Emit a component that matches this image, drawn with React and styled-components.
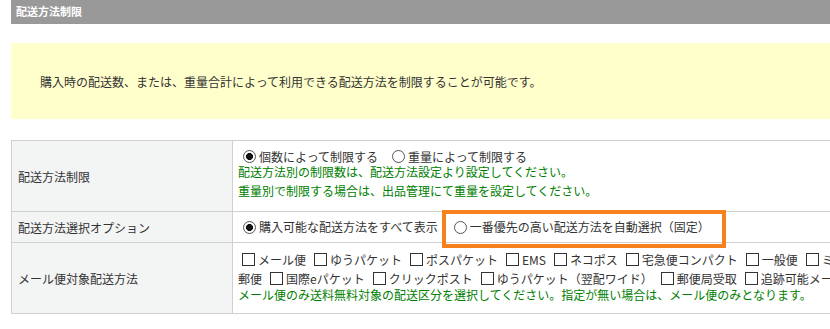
import React from 'react';
import styled, { createGlobalStyle } from 'styled-components';

const GlobalStyle = createGlobalStyle`
  body {
    margin: 0;
    overflow: hidden;
    background: #fff;
    font-family: "Noto Sans CJK JP", "Noto Sans", sans-serif;
    color: #333;
  }
`;

const App = () => {
  return (
    <Page>
      <GlobalStyle />
      <SectionBar>配送方法制限</SectionBar>
      <Notice>購入時の配送数、または、重量合計によって利用できる配送方法を制限することが可能です。</Notice>
      <SettingsTable>
        <colgroup>
          <col style={{ width: 221 }} />
          <col />
        </colgroup>
        <tbody>
          <tr>
            <LabelCell>配送方法制限</LabelCell>
            <ValueCell $pad="7px 5px 11px">
              <Line $h={17}>
                <Choice>
                  <Radio name="limit" defaultChecked />
                  個数によって制限する
                </Choice>
                <Choice>
                  <Radio name="limit" />
                  重量によって制限する
                </Choice>
              </Line>
              <Note $h={14}>配送方法別の制限数は、配送方法設定より設定してください。</Note>
              <Note $h={18} $top={3}>重量別で制限する場合は、出品管理にて重量を設定してください。</Note>
            </ValueCell>
          </tr>
          <tr>
            <LabelCell>配送方法選択オプション</LabelCell>
            <ValueCell $pad="6px 5px">
              <Line $h={18}>
                <Choice $gap={11}>
                  <Radio name="option" defaultChecked />
                  購入可能な配送方法をすべて表示
                </Choice>
                <Choice $gap={0}>
                  <Radio name="option" />
                  一番優先の高い配送方法を自動選択（固定）
                  <Highlight />
                </Choice>
              </Line>
            </ValueCell>
          </tr>
          <tr>
            <LabelCell>メール便対象配送方法</LabelCell>
            <ValueCell $pad="7px 5px 11px">
              <Line $h={19}>
                <Item><Check />メール便</Item>
                <Item><Check />ゆうパケット</Item>
                <Item><Check />ポスパケット</Item>
                <Item><Check />EMS</Item>
                <Item><Check />ネコポス</Item>
                <Item><Check />宅急便コンパクト</Item>
                <Item><Check />一般便</Item>
                <Item><Check />ミニレター</Item>
                <Item><Check />定形外</Item>
              </Line>
              <Line $h={19}>
                <Item>郵便</Item>
                <Item><Check />国際eパケット</Item>
                <Item><Check />クリックポスト</Item>
                <Item><Check />ゆうパケット（翌配ワイド）</Item>
                <Item><Check />郵便局受取</Item>
                <Item><Check />追跡可能メール便</Item>
              </Line>
              <Note $h={14}>メール便のみ送料無料対象の配送区分を選択してください。指定が無い場合は、メール便のみとなります。</Note>
            </ValueCell>
          </tr>
        </tbody>
      </SettingsTable>
    </Page>
  );
};

const Page = styled.div`
  width: 1100px;
  padding-left: 11px;
`;

const SectionBar = styled.div`
  height: 24px;
  line-height: 23px;
  padding-left: 5px;
  background: #999999;
  color: #fff;
  font-size: 11px;
  font-weight: bold;
`;

const Notice = styled.div`
  margin-top: 19px;
  height: 76px;
  display: flex;
  align-items: center;
  padding-left: 29px;
  background: #ffffcc;
  font-size: 12px;
  color: #333;
`;

const SettingsTable = styled.table`
  margin-top: 21px;
  width: 100%;
  border-collapse: collapse;
  font-size: 12px;
  table-layout: fixed;

  td {
    border: 1px solid #d0d0d0;
  }
`;

const LabelCell = styled.td`
  background: #f3f4f4;
  padding: 0 6px;
  vertical-align: middle;
  color: #333;
`;

const ValueCell = styled.td`
  padding: ${(p) => p.$pad};
  vertical-align: top;
  background: #fff;
`;

const Line = styled.div`
  height: ${(p) => p.$h}px;
  line-height: ${(p) => p.$h}px;
  white-space: nowrap;
  display: flex;
  align-items: center;
`;

const Note = styled.div`
  color: #008000;
  line-height: ${(p) => p.$h}px;
  margin-top: ${(p) => p.$top || 0}px;
  white-space: nowrap;
`;

const Choice = styled.label`
  position: relative;
  display: inline-flex;
  align-items: center;
  margin-right: ${(p) => (p.$gap ?? 9)}px;
  color: #333;
`;

const Item = styled.label`
  display: inline-flex;
  align-items: center;
  margin-right: 4px;
  color: #333;
`;

const Radio = styled.input.attrs({ type: 'radio' })`
  appearance: none;
  width: 13px;
  height: 13px;
  margin: 0 3px 0 5px;
  border: 1px solid #555;
  border-radius: 50%;
  background: #fff;
  box-sizing: border-box;

  &:checked {
    background: radial-gradient(circle, #111 0 3.2px, #fff 3.8px);
  }
`;

const Check = styled.input.attrs({ type: 'checkbox' })`
  appearance: none;
  width: 13px;
  height: 13px;
  margin: 0 3px 0 4px;
  border: 1px solid #333;
  border-radius: 0;
  background: #fff;
  box-sizing: border-box;
`;

const Highlight = styled.span`
  position: absolute;
  left: -7px;
  top: -8px;
  right: -16px;
  bottom: -12px;
  border: 4px solid #f7801f;
  pointer-events: none;
`;

export default App;
